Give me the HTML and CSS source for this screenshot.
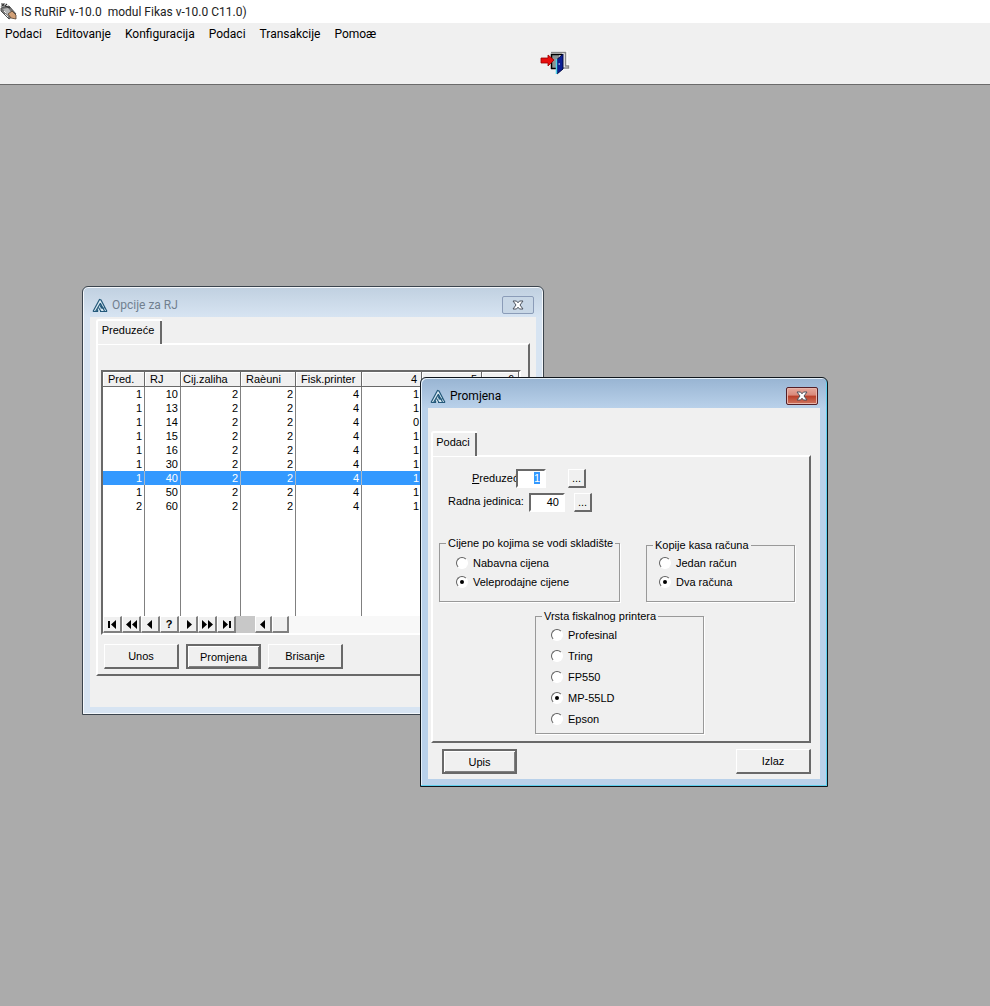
FILE: index.html
```
<!DOCTYPE html>
<html lang="bs">
<head>
<meta charset="utf-8">
<title>IS RuRiP v-10.0 modul Fikas v-10.0 C11.0)</title>
<link rel="stylesheet" href="styles.css">
</head>
<body>
<svg class="defs" width="0" height="0">
  <symbol id="logo" viewBox="0 0 16 15">
    <path d="M7.500 1 .8 13.500h14.400z" fill="#dcebf3"/>
    <path d="M1 13.500 7.500 1.500 9 2l6 11.500M3.500 13.500l5-8.500M6 13.500l-1-2.500M6.500 9.500l2.500 4M8.500 5.500l4 7.500M8.500 10h4M1 13.500h5M8 13.500h7M8 7.500l2.500 3" fill="none" stroke="#24597a" stroke-width="1.200"/>
  </symbol>
  <symbol id="cross" viewBox="0 0 12 10">
    <path d="M1 1h3.500L6 2.800 7.500 1H11L8 5l3 4H7.500L6 7.200 4.500 9H1l3-4z" fill="#fff" stroke="#4c535e" stroke-width="1"/>
  </symbol>
</svg>
<header class="titlebar">
  <svg class="app-icon" width="17" height="17" viewBox="0 0 17 17">
    <path d="M1 5 9 3l7 8-7 5-8-8z" fill="#777" stroke="#4d4d4d"/>
    <path d="M3 6l5-1 4 5-4 3z" fill="#b5b5b5"/>
    <path d="M1 1h3l-2 2h3l2-2M5 3l5 2" fill="none" stroke="#333" stroke-width="1.200"/>
    <path d="M8 11l4-3 4 4v4l-5-1z" fill="#d1a077" stroke="#54402f" stroke-width=".800"/>
    <path d="M5 11l3 3M4 8l2 2" stroke="#eee"/>
  </svg>
  <h1 class="app-title">IS RuRiP v-10.0&nbsp; modul Fikas v-10.0 C11.0)</h1>
</header>
<nav class="menubar">
  <button class="menu">Podaci</button>
  <button class="menu">Editovanje</button>
  <button class="menu">Konfiguracija</button>
  <button class="menu">Podaci</button>
  <button class="menu">Transakcije</button>
  <button class="menu">Pomoæ</button>
</nav>
<div class="toolbar">
  <button class="exit" aria-label="Izlaz iz programa">
    <svg width="30" height="24" viewBox="0 0 30 24">
      <path d="M11 1h15v14h3v2h-8" fill="none" stroke="#fff" stroke-width="3"/>
      <path d="M11 1.500h14.500v13.500h3v2H21" fill="none" stroke="#888" stroke-width="1.500"/>
      <path d="M11 3h8v15h-8z" fill="#8c9494"/>
      <path d="M11.500 18V3.500H22M11 17.500h5" fill="none" stroke="#000" stroke-width="1.500"/>
      <path d="M17 8.500 23 3v15l-6 5z" fill="#0a1e96" stroke="#000840"/>
      <path d="M16.500 8v15" stroke="#4fd0e8" stroke-width="1.500"/>
      <path d="M18.500 13h1.500" stroke="#fff"/>
      <path d="M1 7h7V4l6 5-6 6v-3H1z" fill="#e80d0d" stroke="#900" stroke-width=".800"/>
    </svg>
  </button>
</div>
<main class="desktop">
  <section class="window options">
    <header class="caption">
      <svg width="16" height="15"><use href="#logo"/></svg>
      <h2 class="caption-text">Opcije za RJ</h2>
      <button class="close" aria-label="Zatvori"><svg width="12" height="10"><use href="#cross"/></svg></button>
    </header>
    <div class="client">
      <button class="tab wide">Preduzeće</button>
      <div class="sheet">
        <div class="browse">
          <table class="grid">
            <colgroup><col class="c-pred"><col class="c-rj"><col class="c-num"><col class="c-rac"><col class="c-fisk"><col class="c-num"><col class="c-num"><col></colgroup>
            <thead><tr><th>Pred.</th><th>RJ</th><th class="tight">Cij.zaliha</th><th>Raèuni</th><th>Fisk.printer</th><th class="num">4</th><th class="num">5</th><th class="num">6</th></tr></thead>
            <tbody>
              <tr><td>1</td><td>10</td><td>2</td><td>2</td><td>4</td><td>1</td><td></td><td></td></tr>
              <tr><td>1</td><td>13</td><td>2</td><td>2</td><td>4</td><td>1</td><td></td><td></td></tr>
              <tr><td>1</td><td>14</td><td>2</td><td>2</td><td>4</td><td>0</td><td></td><td></td></tr>
              <tr><td>1</td><td>15</td><td>2</td><td>2</td><td>4</td><td>1</td><td></td><td></td></tr>
              <tr><td>1</td><td>16</td><td>2</td><td>2</td><td>4</td><td>1</td><td></td><td></td></tr>
              <tr><td>1</td><td>30</td><td>2</td><td>2</td><td>4</td><td>1</td><td></td><td></td></tr>
              <tr class="selected"><td>1</td><td>40</td><td>2</td><td>2</td><td>4</td><td>1</td><td></td><td></td></tr>
              <tr><td>1</td><td>50</td><td>2</td><td>2</td><td>4</td><td>1</td><td></td><td></td></tr>
              <tr><td>2</td><td>60</td><td>2</td><td>2</td><td>4</td><td>1</td><td></td><td></td></tr>
              <tr class="rest"><td></td><td></td><td></td><td></td><td></td><td></td><td></td><td></td></tr>
            </tbody>
          </table>
          <div class="vcr">
            <button class="nav" aria-label="Prvi"><svg width="11" height="9"><path d="M1 1h2v7H1zM9 0v9L4 4.500z"/></svg></button>
            <button class="nav" aria-label="Stranica nazad"><svg width="11" height="9"><path d="M5 0v9L0 4.500zM11 0v9L6 4.500z"/></svg></button>
            <button class="nav" aria-label="Prethodni"><svg width="11" height="9"><path d="M7 0v9L2 4.500z"/></svg></button>
            <button class="nav">?</button>
            <button class="nav" aria-label="Sljedeći"><svg width="11" height="9"><path d="M4 0v9l5-4.500z"/></svg></button>
            <button class="nav" aria-label="Stranica naprijed"><svg width="11" height="9"><path d="M0 0v9l5-4.500zM6 0v9l5-4.500z"/></svg></button>
            <button class="nav" aria-label="Zadnji"><svg width="11" height="9"><path d="M2 0v9l5-4.500zM8 1h2v7H8z"/></svg></button>
            <span class="gap"></span>
            <button class="nav small" aria-label="Lijevo"><svg width="11" height="9"><path d="M7 0v9L2 4.500z"/></svg></button>
            <span class="nav small"></span>
          </div>
        </div>
        <div class="actions">
          <button class="btn">Unos</button>
          <button class="btn default">Promjena</button>
          <button class="btn">Brisanje</button>
        </div>
      </div>
    </div>
  </section>

  <section class="window edit active">
    <header class="caption">
      <svg width="16" height="15"><use href="#logo"/></svg>
      <h2 class="caption-text">Promjena</h2>
      <button class="close" aria-label="Zatvori"><svg width="12" height="10"><use href="#cross"/></svg></button>
    </header>
    <form class="client">
      <button type="button" class="tab">Podaci</button>
      <div class="sheet">
        <div class="field company">
          <label for="company"><u>P</u>reduzeć</label>
          <input id="company" type="text" value="1">
          <button type="button" class="lookup">...</button>
        </div>
        <div class="field unit">
          <label for="unit">Radna jedinica:</label>
          <input id="unit" type="text" value="40">
          <button type="button" class="lookup">...</button>
        </div>
        <div class="groups">
          <fieldset class="prices">
            <legend>Cijene po kojima se vodi skladište</legend>
            <label><input type="radio" name="price">Nabavna cijena</label>
            <label><input type="radio" name="price" checked>Veleprodajne cijene</label>
          </fieldset>
          <fieldset class="copies">
            <legend>Kopije kasa računa</legend>
            <label><input type="radio" name="copies">Jedan račun</label>
            <label><input type="radio" name="copies" checked>Dva računa</label>
          </fieldset>
        </div>
        <fieldset class="printer">
          <legend>Vrsta fiskalnog printera</legend>
          <label><input type="radio" name="printer">Profesinal</label>
          <label><input type="radio" name="printer">Tring</label>
          <label><input type="radio" name="printer">FP550</label>
          <label><input type="radio" name="printer" checked>MP-55LD</label>
          <label><input type="radio" name="printer">Epson</label>
        </fieldset>
      </div>
      <div class="footer">
        <button type="button" class="btn default">Upis</button>
        <button type="button" class="btn">Izlaz</button>
      </div>
    </form>
  </section>
</main>
<script src="app.js"></script>
</body>
</html>
```

FILE: app.js
```
document.getElementById("company").select();
```

FILE: styles.css
```
* { box-sizing: border-box; }
body {
  margin: 0;
  min-height: 100vh;
  display: flex;
  flex-direction: column;
  background: #ababab;
  color: #000;
  font: 11px/14px "Liberation Sans", Arial, sans-serif;
}
button, input { font: inherit; color: inherit; }
button { padding: 0; border: 0; background: none; }
.defs { position: absolute; }

.titlebar { display: flex; align-items: center; gap: 4px; height: 23px; background: #fff; }
.app-title { margin: 0; font: 12px/16px Roboto, sans-serif; color: #222; }
.menubar {
  display: flex;
  gap: 14px;
  height: 21px;
  padding-left: 5px;
  background: #f0f0f0;
  font: 12px/20px Roboto, sans-serif;
}
.toolbar {
  display: flex;
  justify-content: center;
  height: 41px;
  padding: 7px 0 0 120px;
  background: #f0f0f0;
  border-bottom: 1px solid #6b6b6b;
}
.exit { height: 24px; }
.exit svg { display: block; }

.desktop { position: relative; flex: 1; overflow: hidden; }
.window {
  position: absolute;
  padding: 0 7px 7px;
  border: 1px solid #3b444d;
  border-radius: 6px 6px 0 0;
  background: linear-gradient(#c0d0e0, #d7e4f2 30px);
  box-shadow: inset 0 0 0 1px #f4f8fc;
}
.options { left: 82px; top: 201px; width: 462px; }
.edit { left: 420px; top: 292px; width: 408px; }
.active {
  border-color: #10161c;
  background: linear-gradient(#98b4d2, #b9d1ea 30px);
  box-shadow: inset -1px -1px 0 #5fd0ee, inset 1px 1px 0 #e4f0fa;
}
.caption { display: flex; align-items: center; gap: 4px; height: 30px; padding: 6px 2px 0; }
.caption-text { flex: 1; margin: 0; font: 12px/16px Roboto, sans-serif; color: #71808f; }
.active .caption-text { color: #000; }
.close {
  display: flex;
  align-items: center;
  justify-content: center;
  width: 32px;
  height: 18px;
  border: 1px solid #8b9cb8;
  border-radius: 2px;
  background: #c8d7e6;
}
.active .close {
  border-color: #541f27;
  background: linear-gradient(#e6a99d, #d9887a 45%, #b93e28 50%, #cf7560);
  box-shadow: inset 0 0 0 1px #e8b5aa;
}
.client { background: #f0f0f0; padding: 2px 6px 31px; }
.edit .client { padding: 23px 9px 5px 3px; }

.tab {
  position: relative;
  z-index: 1;
  display: block;
  width: 46px;
  height: 25px;
  margin-bottom: -1px;
  padding: 0 4px 5px 0;
  background: #f0f0f0;
  border: solid #fff;
  border-width: 2px 0 0 2px;
  border-radius: 3px 0 0 0;
  box-shadow: inset -2px 0 0 #696969;
}
.tab.wide { width: 66px; }
.sheet {
  border: 2px solid;
  border-color: #fff #696969 #696969 #fff;
}
.options .sheet { padding: 25px 7px 5px 3px; }
.edit .sheet { padding: 9px 14px 7px 6px; }

.browse { border: 2px solid; border-color: #696969 #fff #fff #696969; }
.grid { width: 100%; table-layout: fixed; border-collapse: separate; border-spacing: 0; background: #fff; }
.c-pred { width: 42px; }
.c-rj { width: 36px; }
.c-num { width: 60px; }
.c-rac { width: 55px; }
.c-fisk { width: 66px; }
.grid th {
  height: 15px;
  padding: 0 4px 1px 5px;
  text-align: left;
  font-weight: normal;
  line-height: 12px;
  white-space: nowrap;
  background: #f0f0f0;
  border-right: 1px solid #696969;
  border-bottom: 1px solid #696969;
  box-shadow: inset 1px 1px 0 #fff;
}
.grid th.tight { padding: 0 2px 1px; }
.grid th.num { text-align: right; }
.grid td { height: 14px; padding: 0 2px; line-height: 14px; text-align: right; border-right: 1px solid #808080; }
.grid .selected td { background: #3399ff; color: #fff; border-color: #a8b8c8; }
.grid .rest td { height: 103px; }
.vcr { display: flex; height: 17px; background: #f8f8f8; }
.nav {
  display: flex;
  align-items: center;
  justify-content: center;
  width: 19px;
  font-weight: bold;
  background: #f0f0f0;
  border: solid;
  border-width: 1px 2px 2px 1px;
  border-color: #fff #808080 #808080 #fff;
}
.nav.small { width: 17px; }
.gap { width: 19px; background: #c8c8c8; }

.actions { display: flex; gap: 7px; padding: 9px 0 0 3px; }
.btn {
  width: 75px;
  height: 25px;
  background: #f0f0f0;
  border: solid;
  border-width: 1px 2px 2px 1px;
  border-color: #fff #696969 #696969 #fff;
}
.btn.default { border: 2px solid #696969; box-shadow: inset 1px 1px 0 #fff, inset -1px -1px 0 #808080; }
.footer { display: flex; justify-content: space-between; padding: 6px 0 0 11px; }

.field { display: flex; align-items: center; height: 24px; }
.company { padding-left: 33px; }
.company label { width: 44px; }
.company input { width: 30px; }
.company .lookup { margin-left: 22px; }
.unit { padding-left: 9px; }
.unit label { width: 81px; padding-bottom: 3px; }
.unit input { width: 36px; }
.unit .lookup { margin-left: 9px; }
.field input {
  height: 19px;
  padding: 0 4px;
  text-align: right;
  background: #fff;
  border: 2px solid;
  border-color: #696969 #fff #fff #696969;
  border-radius: 0;
  outline: 0;
}
.field input::selection { background: #3399ff; color: #fff; }
.lookup {
  width: 18px;
  height: 19px;
  background: #f0f0f0;
  border: solid;
  border-width: 1px 2px 2px 1px;
  border-color: #fff #696969 #696969 #fff;
}

.groups { display: flex; justify-content: space-between; align-items: flex-end; padding-top: 22px; }
fieldset {
  min-width: 0;
  margin: 0;
  padding: 0 14px 10px 16px;
  border: 1px solid #999;
  box-shadow: 1px 1px 0 #fff;
}
legend { padding: 0 2px; margin-left: -10px; line-height: 14px; white-space: nowrap; }
fieldset label { display: flex; align-items: center; gap: 5px; height: 19px; white-space: nowrap; }
.prices { width: 181px; }
.prices label:first-of-type { margin-top: 3px; }
.copies { width: 149px; padding-left: 12px; }
.copies legend { margin-left: -6px; }
.copies label:first-of-type { margin-top: 1px; }
.printer { width: 169px; margin: 7px 0 0 96px; padding: 0 14px 4px 15px; }
.printer legend { margin-left: -9px; }
.printer label { height: 21px; }
.printer label:first-of-type { margin-top: 1px; }
input[type="radio"] {
  appearance: none;
  display: grid;
  place-items: center;
  width: 12px;
  height: 12px;
  margin: 0;
  border: 1px solid;
  border-color: #606060 #fff #fff #606060;
  border-radius: 50%;
  background: #fff;
}
input[type="radio"]:checked::before { content: ""; width: 4px; height: 4px; border-radius: 50%; background: #000; }
```
